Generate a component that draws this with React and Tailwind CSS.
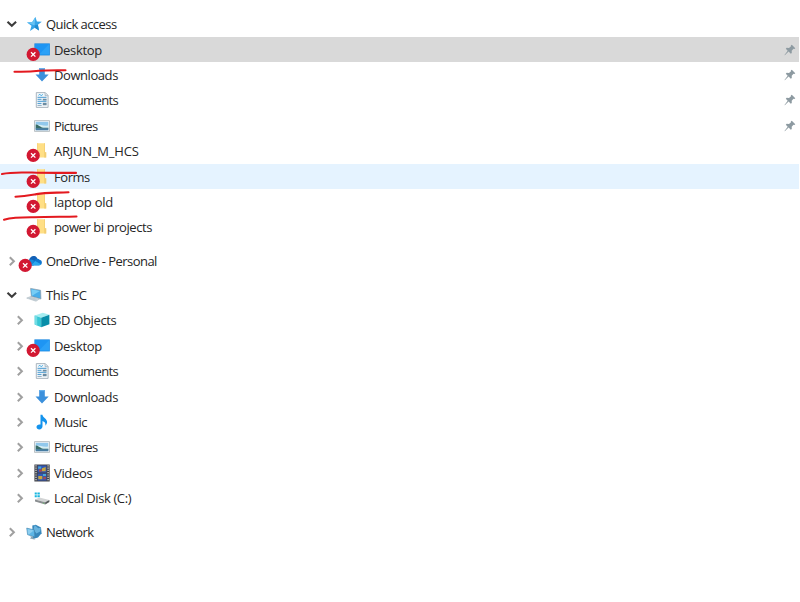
import React from 'react';

function Chevron({ open }) {
  return open ? (
    <svg className="h-4 w-4" viewBox="0 0 16 16" fill="none" stroke="#3c3c3c" strokeWidth="2.1"><path d="M3.5 5.8 7.800 9.800l4.300-4" /></svg>
  ) : (
    <svg className="h-4 w-4" viewBox="0 0 16 16" fill="none" stroke="#a0a0a0" strokeWidth="2"><path d="M5.800 4.200 9.900 8.200l-4.100 4" /></svg>
  );
}

const shapes = {
  star: (
    <g>
      <path d="m9.4 1 1.500 4.500 4.900.3-3.900 3 1.100 5.700-4.200-2.700-4.800 3.200 1.500-5.300L1 6.500l5.300-.6Z" fill="#37a5e8" />
      <path d="m9.400 1-.8 8.600L1 6.500l5.300-.6Z" fill="#68c3f4" />
      <path d="m8.600 9.500 3.300-.7 1.100 5.700-4.200-2.700Z" fill="#218bd0" />
    </g>
  ),
  desktop: (
    <g>
      <path d="M.4 1.4h15.400v12H.4Z" fill="#1283df" />
      <path d="M1 2h14.200v10.600H1Z" fill="#1e95f3" />
      <path d="M15.200 2v10.600H5Z" fill="#2ca1f7" />
    </g>
  ),
  download: (
    <g>
      <path d="M5.200 1h5.600v6.500h3.900L8 14.600 1.500 7.500h3.700Z" fill="#3b90dc" />
      <path d="M5.200 1h5.600v1.200H5.200Z" fill="#67b1ed" />
    </g>
  ),
  document: (
    <g>
      <path d="M2.300.6h9l2.800 2.800v12H2.300Z" fill="#f4f8fb" stroke="#98a5af" strokeWidth=".8" />
      <path d="M11 .8v2.900h3" fill="#d2dee6" stroke="#98a5af" strokeWidth=".6" />
      <path d="M3.500 5.300h9M3.500 7.300h4M3.500 9.300h9M3.500 11.400h4" stroke="#4598d0" strokeWidth="1" />
      <path d="M4.300 3.400 6 2.200l1 1.600 2-1.500" fill="none" stroke="#4aaee5" strokeWidth=".9" />
      <path d="M8.800 6.700h3.800v1.800H8.800ZM8.800 10.700h3.800v2.600H8.800Z" fill="#6b8ba1" />
      <path d="M3.500 13.400h4.200" stroke="#8bacc1" />
    </g>
  ),
  picture: (
    <g>
      <path d="M.5 2.600h15v10.800H.5Z" fill="#f4f5f6" stroke="#a9b2b8" strokeWidth=".8" />
      <path d="M1.700 3.800h12.600v8.400H1.700Z" fill="#91c8ec" />
      <path d="M1.700 6.900c3-1.500 5 1.200 12.600.7v2.600H1.700Z" fill="#d5edf3" />
      <path d="M1.700 6.600c2.100-.3 3.800 2 6.200 2.800 2 .5 4.200.3 6.400.4v.9H1.700Z" fill="#396c66" />
      <path d="M1.700 10.300h12.600v1.900H1.700Z" fill="#477ca2" />
    </g>
  ),
  folder: (
    <g>
      <path d="M3 .3h7.900v8.900h1.300v5.200H3Z" fill="#ffdf85" />
      <path d="M10.200.3h.8v8.900h1.200v5.200h-2Z" fill="#f3ce72" />
      <path d="M3 .3h1.100v14.100H3Z" fill="#f9d67b" />
    </g>
  ),
  cloud: (
    <g>
      <path d="M3 7.200c.7-3 3-4.700 5.400-4.100 1.500.3 2.500 1.400 3.100 2.800l-4 6.500H1.800Z" fill="#1260b6" />
      <path d="M2.500 7.600c2.600-2.200 4.400-.8 6.400.7l4.300 4H3.500C.3 12.300-.4 9 2.500 7.600Z" fill="#1689dc" />
      <path d="M8.200 7.700c1.400-2.200 4.100-2.500 5.700-.6 2.600.1 2.900 5.200-.5 5.200H5.500Z" fill="#0f75cf" />
      <path d="m9.200 8.100 5.900 3.200c-.5.6-1 .9-1.700.9H5.200Z" fill="#2ba7ed" />
    </g>
  ),
  computer: (
    <g>
      <path d="m4.600 1.400 10 1.900.3 8.700-9.500-2.500Z" fill="#4a97cf" stroke="#91a7b5" strokeWidth=".8" />
      <path d="m5.300 2.300 8.600 1.600.2 7-8.200-2.200Z" fill="#48ade9" />
      <path d="m5.300 2.300 8.600 1.600L6 8.700Z" fill="#78cdf5" />
      <path d="m.7 11.100 4.200-1.700 8.800 2.400-3.700 2.400Z" fill="#d9e2e7" stroke="#97a7b1" strokeWidth=".5" />
      <path d="m3 11.100 7.200 2M4.200 10.400l7.100 2" stroke="#9eafb9" strokeWidth=".5" />
    </g>
  ),
  cube: (
    <g>
      <path d="M.7 3.400 8.800.8l6.600 2-8.200 3Z" fill="#a5edf0" />
      <path d="m.7 3.400 6.500 2.400v9.400L.7 12.400Z" fill="#38c7d4" />
      <path d="m7.200 5.800 8.200-3v9.400l-8.200 3Z" fill="#078ea9" />
      <path d="m.7 3.400 2.500.9v9.200l-2.500-1.100Z" fill="#71dce4" />
    </g>
  ),
  music: <path d="M6.500.7h1.900c.4 3 4.700 3.900 4.700 7.400 0 1.500-.8 2.700-1.800 3.600.7-2.800-.8-4.100-2.800-4.800v5.300c0 1.900-1.400 3.200-3.200 3.200-1.600 0-2.800-.9-2.800-2.400 0-1.800 1.900-3 4-2.400Z" fill="#1493ed" />,
  video: (
    <g>
      <path d="M.4-.5h15.300v17H.4Z" fill="#41434a" />
      <path d="M2 .2v16M14.100.2v16" stroke="#d2d2d0" strokeWidth="1.300" strokeDasharray="1.200 1.100" />
      <path d="M3.700.5h8.800v7H3.700ZM3.700 8.400h8.800v7.200H3.700Z" fill="#3057b7" />
      <path d="M4.200 1.500h3v2.200h-3ZM9 8.900h3v2H9Z" fill="#47a6d7" />
      <path d="m8 3.200 3.700-1.300v4.300H8ZM4.300 11h4v3.200h-4Z" fill="#c7a63d" />
      <path d="M5 4.300h2.800v2.500H5ZM9.400 11.700h2.500v2.500H9.400Z" fill="#a84a4e" />
    </g>
  ),
  disk: (
    <g>
      <path d="M.7 2.500h2.100v2.100H.7ZM3.400 2.500h2.400v2.100H3.400ZM.7 5.200h2.100v2.100H.7ZM3.400 5.200h2.400v2.100H3.400Z" fill="#16b5de" />
      <path d="m1 9.600 4.400-2.100 10 2.600-4.200 2.200Z" fill="#d2d4d5" />
      <path d="m1 9.600 10.200 2.700v2.100L1 11.500Z" fill="#8a8e91" />
      <path d="m11.200 12.300 4.200-2.200V12l-4.200 2.400Z" fill="#55595b" />
      <path d="M9.700 12.800v.8" stroke="#63df65" />
    </g>
  ),
  network: (
    <g>
      <path d="m6.300 1.400 3.500-.7 5.200 2.700.6 5.900-3.600 4.300-5.200 1.300Z" fill="#3787bb" />
      <path d="m8.600 1.100 3.700 3.200 2.700-.9-.9 4-3.700 2-2.800-4Z" fill="#68b3de" />
      <path d="m.7 4.100 7.700 1.800.4 7.200-7.200-2.400Z" fill="#5eb6e6" stroke="#4584ad" strokeWidth=".6" />
      <path d="m1.500 5 6.200 1.400-4.900 4.100-.7-.2Z" fill="#8dceef" />
      <path d="m4.500 12.100 2.700.8v1.400l2.400.6-1.400.7-4.300-1.200 1-.6Z" fill="#8ba5b5" />
    </g>
  ),
};

function ItemIcon({ kind, error }) {
  return (
    <span className="relative ml-1.5 mr-1 h-4 w-4 shrink-0">
      <svg className="h-4 w-4 overflow-visible" viewBox="0 0 16 16">{shapes[kind]}</svg>
      {error && (
        <svg className="absolute -left-2 top-[5px] h-3.5 w-3.5 overflow-visible" viewBox="0 0 14 14">
          <circle cx="7.200" cy="7.400" r="6.600" fill="#d21832" />
          <path d="m5 5.200 4.400 4.400M9.400 5.200 5 9.600" stroke="#fff" strokeWidth="1.300" />
        </svg>
      )}
    </span>
  );
}

function Pin() {
  return (
    <svg className="mr-[3px] h-3 w-3" viewBox="0 0 12 12">
      <path d="m7.800.7 3.500 3.500-.9.8-.9-.2-1.800 1.900.1 2.200-1 .9L4.600 7.600.8 11.200l-.3-.3 3.200-4.200-1.900-2 .9-.9 2.300.1 2-1.700-.2-.7Z" fill="#8d9aa1" />
    </svg>
  );
}

function Row({ label, kind, level = 1, open, expandable, error, pinned, state, tracking }) {
  const bg = state === 'selected' ? 'bg-[#d9d9d9]' : state === 'hover' ? 'bg-[#e5f3ff]' : '';
  return (
    <li className={`mr-px flex h-[25.4px] items-center ${level ? 'pl-3' : 'pl-1'} ${bg}`}>
      <span className="h-4 w-4 shrink-0">{expandable && <Chevron open={open} />}</span>
      <ItemIcon kind={kind} error={error} />
      <span className={`flex-1 whitespace-nowrap leading-5 ${tracking}`}>{label}</span>
      {pinned && <Pin />}
    </li>
  );
}

const groups = [
  [
    { label: 'Quick access', kind: 'star', level: 0, expandable: true, open: true, tracking: 'tracking-[-0.55px]' },
    { label: 'Desktop', kind: 'desktop', error: true, pinned: true, state: 'selected', tracking: 'tracking-[-0.33px]' },
    { label: 'Downloads', kind: 'download', pinned: true, tracking: 'tracking-[-0.43px]' },
    { label: 'Documents', kind: 'document', pinned: true, tracking: 'tracking-[-0.6px]' },
    { label: 'Pictures', kind: 'picture', pinned: true, tracking: 'tracking-[-0.65px]' },
    { label: 'ARJUN_M_HCS', kind: 'folder', error: true, tracking: 'tracking-[-0.22px]' },
    { label: 'Forms', kind: 'folder', error: true, state: 'hover', tracking: 'tracking-[-0.45px]' },
    { label: 'laptop old', kind: 'folder', error: true, tracking: 'tracking-[-0.22px]' },
    { label: 'power bi projects', kind: 'folder', error: true, tracking: 'tracking-[-0.42px]' },
  ],
  [{ label: 'OneDrive - Personal', kind: 'cloud', level: 0, expandable: true, error: true, tracking: 'tracking-[-0.54px]' }],
  [
    { label: 'This PC', kind: 'computer', level: 0, expandable: true, open: true, tracking: 'tracking-[-0.5px]' },
    { label: '3D Objects', kind: 'cube', expandable: true, tracking: 'tracking-[-0.35px]' },
    { label: 'Desktop', kind: 'desktop', expandable: true, error: true, tracking: 'tracking-[-0.33px]' },
    { label: 'Documents', kind: 'document', expandable: true, tracking: 'tracking-[-0.6px]' },
    { label: 'Downloads', kind: 'download', expandable: true, tracking: 'tracking-[-0.43px]' },
    { label: 'Music', kind: 'music', expandable: true, tracking: 'tracking-[-0.45px]' },
    { label: 'Pictures', kind: 'picture', expandable: true, tracking: 'tracking-[-0.65px]' },
    { label: 'Videos', kind: 'video', expandable: true, tracking: 'tracking-[-0.33px]' },
    { label: 'Local Disk (C:)', kind: 'disk', expandable: true, tracking: 'tracking-[-0.4px]' },
  ],
  [{ label: 'Network', kind: 'network', level: 0, expandable: true, tracking: 'tracking-[-0.62px]' }],
];

export default function App() {
  return (
    <main className="relative h-[602px] w-[800px] overflow-hidden bg-white pt-[11.6px] font-['Open_Sans','Noto_Sans',sans-serif] text-[13px] text-[#262626]">
      <nav className="flex flex-col gap-[8.4px]">
        {groups.map((rows, i) => (
          <ul key={i}>{rows.map((row) => <Row key={row.label} {...row} />)}</ul>
        ))}
      </nav>
      <svg className="pointer-events-none absolute left-0 top-0 h-[230px] w-[100px]" viewBox="0 0 100 230" fill="none" stroke="#e3191f" strokeWidth="2.100" strokeLinecap="round">
        <path d="M14.500 71.700C25 72 31 71.800 39 70.800c8-.7 17-.5 26.500-.5" />
        <path d="M2 174c10-2.200 18-1.400 30-1.500 15 .6 29 .2 44 .4" />
        <path d="M15.500 196.700c9-.4 14-1.400 21-2.600 10-1.800 20-1.200 32-1.900" />
        <path d="M4 219.700c10-2.600 18-2.400 30-2.400 14-.8 28-.4 42.500-.8" />
      </svg>
    </main>
  );
}
